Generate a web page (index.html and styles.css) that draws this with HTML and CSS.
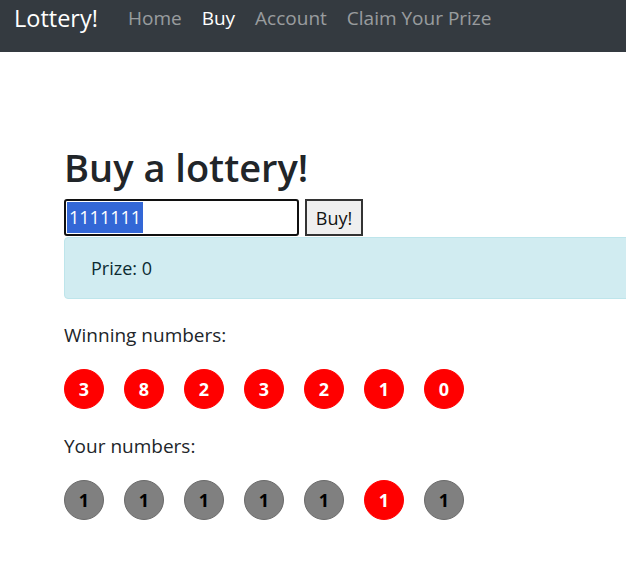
FILE: index.html
```html
<!DOCTYPE html>
<html lang="en">
<head>
    <meta charset="UTF-8">
    <meta name="viewport" content="width=device-width, initial-scale=1.0">
    <title>Lottery!</title>
    <link rel="stylesheet" href="styles.css">
</head>
<body>
    <nav class="navbar">
        <a class="brand" href="#">Lottery!</a>
        <a class="nav-link" href="#">Home</a>
        <a class="nav-link active" href="#">Buy</a>
        <a class="nav-link" href="#">Account</a>
        <a class="nav-link" href="#">Claim Your Prize</a>
    </nav>

    <main class="container">
        <h1>Buy a lottery!</h1>
        <form class="buy-form">
            <div class="number-input"><span class="selected">1111111</span></div>
            <button type="button" class="buy-btn">Buy!</button>
        </form>
        <div class="alert">Prize: 0</div>

        <p class="label">Winning numbers:</p>
        <div class="balls">
            <span class="ball hit">3</span>
            <span class="ball hit">8</span>
            <span class="ball hit">2</span>
            <span class="ball hit">3</span>
            <span class="ball hit">2</span>
            <span class="ball hit">1</span>
            <span class="ball hit">0</span>
        </div>

        <p class="label">Your numbers:</p>
        <div class="balls">
            <span class="ball">1</span>
            <span class="ball">1</span>
            <span class="ball">1</span>
            <span class="ball">1</span>
            <span class="ball">1</span>
            <span class="ball hit">1</span>
            <span class="ball">1</span>
        </div>
    </main>
</body>
</html>
```

FILE: styles.css
```css
* {
    box-sizing: border-box;
}
body {
    margin: 0;
    font-family: "Open Sans", "Noto Sans", Arial, sans-serif;
    color: #212529;
    background: #fff;
    overflow: hidden;
}
.navbar {
    display: flex;
    align-items: flex-start;
    height: 52px;
    padding: 3px 14px 0;
    background-color: #343a40;
}
.brand {
    font-size: 23.5px;
    color: #fff;
    text-decoration: none;
    margin-right: 30px;
    line-height: 30px;
}
.nav-link {
    font-size: 19px;
    line-height: 30px;
    color: rgba(255, 255, 255, 0.5);
    text-decoration: none;
    margin-right: 20px;
}
.nav-link.active {
    color: #fff;
}
.container {
    padding: 92px 0 0 64px;
    overflow: hidden;
}
h1 {
    margin: 0 0 9px;
    font-size: 38px;
    font-weight: 600;
    line-height: 46px;
}
.buy-form {
    display: flex;
    gap: 6px;
    height: 37px;
}
.number-input {
    width: 235px;
    border: 2px solid #101010;
    border-radius: 3px;
    padding: 1px 0 0 1px;
    font-size: 18px;
    line-height: 31px;
}
.selected {
    display: inline-block;
    background: #3367d6;
    color: #fff;
    padding: 0 2px;
}
.buy-btn {
    width: 58px;
    border: 2px solid #333;
    background: #efefef;
    font-family: inherit;
    font-size: 18px;
    color: #111;
    padding: 0;
}
.alert {
    width: 600px;
    height: 62px;
    margin-top: 1px;
    padding: 18px 26px;
    background: #d1ecf1;
    border: 1px solid #bee5eb;
    border-radius: 4px;
    color: #0c2b31;
    font-size: 18px;
}
.label {
    margin: 21px 0 0;
    font-size: 19px;
    line-height: 30px;
}
.balls + .label {
    margin-top: 22px;
}
.balls {
    display: flex;
    gap: 20px;
    margin-top: 19px;
}
.ball {
    width: 40px;
    height: 40px;
    border-radius: 50%;
    background: #808080;
    border: 1px solid #6a6a6a;
    display: flex;
    align-items: center;
    justify-content: center;
    font-weight: 700;
    font-size: 18px;
    color: #000;
}
.ball.hit {
    background: #f00;
    border-color: #f00;
    color: #fff;
}
```
